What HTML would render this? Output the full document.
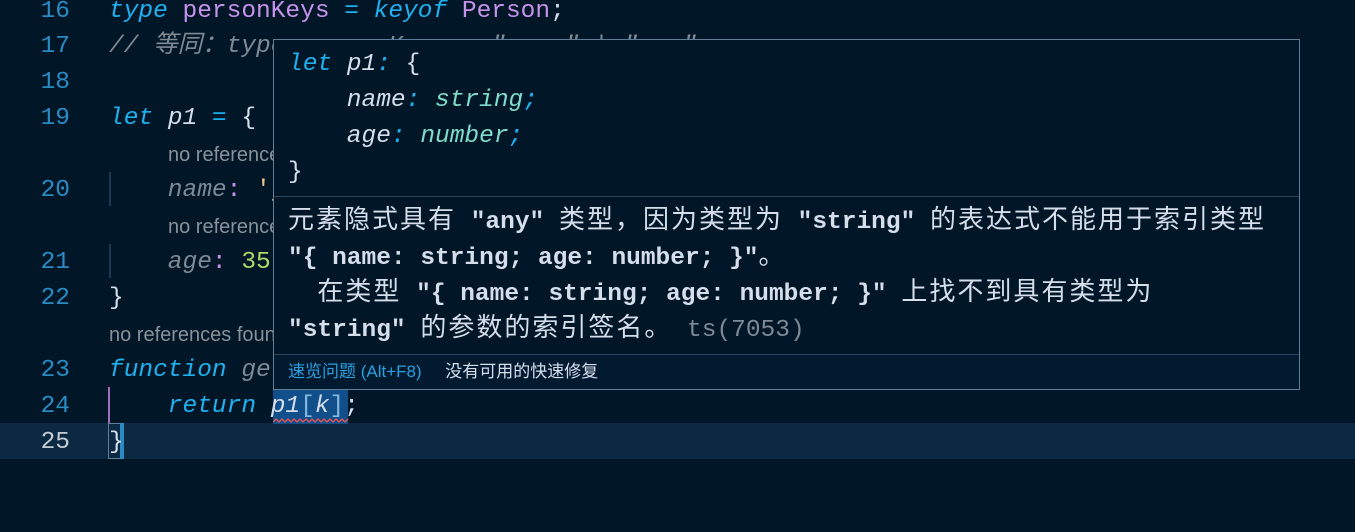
<!DOCTYPE html>
<html><head><meta charset="utf-8"><style>
body{margin:0;width:1355px;height:532px;background:#011627;overflow:hidden;position:relative;font-family:"Liberation Mono","Noto Sans CJK SC",monospace;font-size:24.5px;color:#d6deeb}
.l{position:absolute;left:0;height:36px;line-height:36px;white-space:pre;}
.n{position:absolute;left:0;width:70px;text-align:right;color:#2a8bc4;}
.c{position:absolute;left:109px;color:#d6deeb;}
.kw{color:#1fb1ef;font-style:italic}
.pu{color:#c792ea}
.it{font-style:italic}
.cm{color:#7f8a94;font-style:italic}
.gr{color:#7e8a96;font-style:italic}
.lens{color:#8a9199;font-family:"Liberation Sans","Noto Sans CJK SC",sans-serif;font-size:20px}
.nu{color:#addb67}
#pop{position:absolute;left:273px;top:39px;width:1025px;height:349px;background:#011627;border:1px solid #5f7e97;}
#pop .r{position:absolute;left:14px;white-space:pre;line-height:36px;height:36px;color:#d6deeb}
.sep{position:absolute;left:0;right:0;height:1px;background:#2d4559}
.ty{color:#7fdbca;font-style:italic}
.msg{font-family:"Liberation Mono","WenQuanYi Zen Hei",monospace;font-size:24.5px}
.msg b{font-weight:bold}
.z{font-family:"WenQuanYi Zen Hei","Noto Sans CJK SC",sans-serif;font-size:26px;line-height:0;letter-spacing:2px}
</style></head><body>
<div style="position:absolute;left:0;top:423px;width:1355px;height:36px;background:#0b2942"></div>
<div style="position:absolute;left:109px;top:172px;width:2px;height:34px;background:#1b3a52"></div>
<div style="position:absolute;left:109px;top:244px;width:2px;height:34px;background:#1b3a52"></div>
<div style="position:absolute;left:108px;top:387px;width:2px;height:36px;background:#a070c0"></div>
<div style="position:absolute;left:108px;top:423px;width:16px;height:36px;border:1px solid #5f7e97;box-sizing:border-box;background:#0b2942"></div>
<div style="position:absolute;left:120px;top:423px;width:4px;height:36px;background:#2a8bc4"></div>
<div style="position:absolute;left:273px;top:390px;width:75px;height:34px;background:#114f8a"></div>
<svg style="position:absolute;left:273px;top:418px" width="76" height="6"><path d="M0 4 L3 1 L6 4 L9 1 L12 4 L15 1 L18 4 L21 1 L24 4 L27 1 L30 4 L33 1 L36 4 L39 1 L42 4 L45 1 L48 4 L51 1 L54 4 L57 1 L60 4 L63 1 L66 4 L69 1 L72 4 L75 1" stroke="#ef5350" fill="none" stroke-width="1.3"/></svg>

<div class="l" style="top:-6px;width:1355px"><span class="n">16</span><span class="c"><span class="kw">type</span> <span class="pu">personKeys</span> <span class="kw">=</span> <span class="kw">keyof</span> <span class="pu">Person</span>;</span></div>
<div class="l" style="top:29px;width:1355px"><span class="n">17</span><span class="c cm">// 等同：type personKeys = "name" | "age"</span></div>
<div class="l" style="top:65px;width:1355px"><span class="n">18</span></div>
<div class="l" style="top:101px;width:1355px"><span class="n">19</span><span class="c"><span class="kw">let</span> <span class="it">p1</span> <span class="kw">=</span> {</span></div>
<div class="l" style="top:137px;width:1355px"><span class="c lens" style="left:168px">no references found</span></div>
<div class="l" style="top:173px;width:1355px"><span class="n">20</span><span class="c"><span class="gr">    name</span><span class="pu">:</span> <span style="color:#ecc48d">'jack'</span>,</span></div>
<div class="l" style="top:209px;width:1355px"><span class="c lens" style="left:168px">no references found</span></div>
<div class="l" style="top:245px;width:1355px"><span class="n">21</span><span class="c"><span class="gr">    age</span><span class="pu">:</span> <span class="nu">35</span></span></div>
<div class="l" style="top:281px;width:1355px"><span class="n">22</span><span class="c">}</span></div>
<div class="l" style="top:317px;width:1355px"><span class="c lens">no references found</span></div>
<div class="l" style="top:353px;width:1355px"><span class="n">23</span><span class="c"><span class="kw">function</span> <span class="gr">getVal</span>(k: string) {</span></div>
<div class="l" style="top:389px;width:1355px"><span class="n">24</span><span class="c"><span class="kw">    return</span> <span class="it">p1</span><span style="color:#7fb8e0">[</span><span class="it">k</span><span style="color:#7fb8e0">]</span>;</span></div>
<div class="l" style="top:425px;width:1355px"><span class="n" style="color:#c5ccd4">25</span><span class="c">}</span></div>

<div id="pop">
<div class="r" style="top:7px"><span class="kw">let</span> <span class="it">p1</span><span class="kw">:</span> {</div>
<div class="r" style="top:43px"><span class="it">    name</span><span class="kw">:</span> <span class="ty">string</span><span class="kw">;</span></div>
<div class="r" style="top:79px"><span class="it">    age</span><span class="kw">:</span> <span class="ty">number</span><span class="kw">;</span></div>
<div class="r" style="top:115px">}</div>
<div class="sep" style="top:156px"></div>
<div class="r msg" style="top:165px"><span class="z">元素隐式具有</span> <b>"any"</b> <span class="z">类型，因为类型为</span> <b>"string"</b> <span class="z">的表达式不能用于索引类型</span></div>
<div class="r msg" style="top:201px"><b>"{ name: string; age: number; }"</b><span class="z">。</span></div>
<div class="r msg" style="top:237px">  <span class="z">在类型</span> <b>"{ name: string; age: number; }"</b> <span class="z">上找不到具有类型为</span></div>
<div class="r msg" style="top:273px"><b>"string"</b> <span class="z">的参数的索引签名。</span> <span style="color:#7e8a96">ts(7053)</span></div>
<div class="sep" style="top:314px"></div>
<div style="position:absolute;left:0;right:0;top:315px;bottom:0;background:#011a30"></div>
<div class="r" style="top:315px;line-height:34px;font-family:'Liberation Sans','Noto Sans CJK SC',sans-serif;font-size:17px"><span style="color:#2aa0de">速览问题 (Alt+F8)</span>     <span style="color:#d6deeb">没有可用的快速修复</span></div>
</div>
</body></html>
